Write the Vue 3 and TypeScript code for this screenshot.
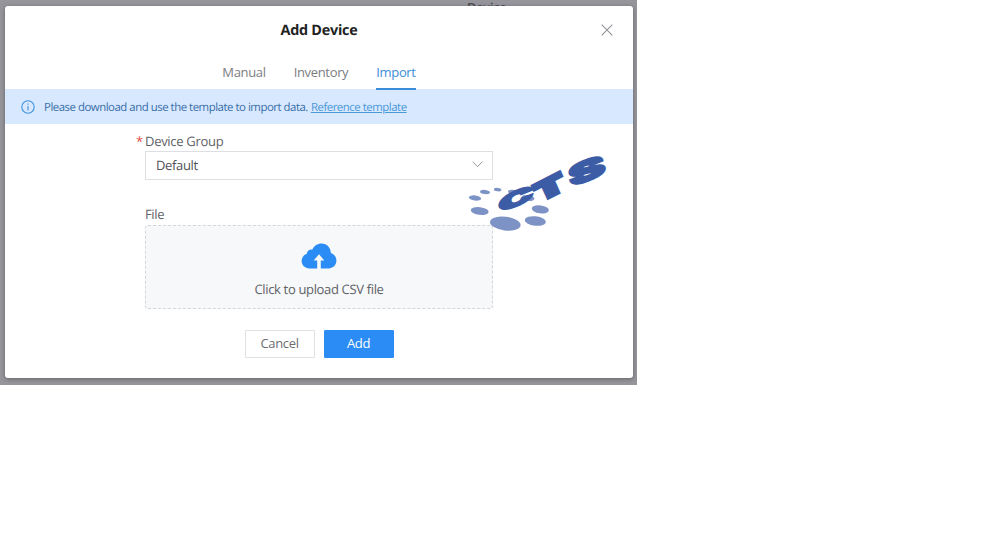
<script setup lang="ts">
import { ref } from 'vue'

const tabs = ['Manual', 'Inventory', 'Import']
const activeTab = ref('Import')
const dots = [
  { x: 475, y: 198, rx: 6.2, ry: 2.6 },
  { x: 485, y: 192, rx: 5, ry: 2.1 },
  { x: 497.7, y: 189.6, rx: 3.8, ry: 1.7 },
  { x: 513, y: 192, rx: 5, ry: 2.2 },
  { x: 528, y: 198, rx: 6.5, ry: 3 },
  { x: 479.7, y: 211, rx: 9, ry: 3.9 },
  { x: 540.3, y: 209.4, rx: 8.6, ry: 4 },
  { x: 535.3, y: 221, rx: 10.6, ry: 4.7 },
  { x: 505.3, y: 223.6, rx: 15.4, ry: 6.9 },
]
</script>

<template>
  <main class="backdrop">
    <div class="behind">Device</div>
    <section class="dialog">
      <header class="header">
        <h1>Add Device</h1>
        <button class="close" aria-label="Close">
          <svg width="12" height="12" viewBox="0 0 12 12"><path d="M.7.7 11.3 11.3M11.3.7.7 11.3" /></svg>
        </button>
      </header>
      <nav class="tabs">
        <button
          v-for="tab in tabs"
          :key="tab"
          class="tab"
          :class="{ active: tab === activeTab }"
          @click="activeTab = tab"
        >{{ tab }}</button>
      </nav>
      <div class="notice">
        <svg class="info" width="14" height="14" viewBox="0 0 14 14">
          <circle cx="7" cy="7" r="6.2" />
          <path d="M7 6v4.4M7 3.4v1.3" />
        </svg>
        <span class="message">Please download and use the template to import data.</span>
        <a class="link">Reference template</a>
      </div>
      <form class="form">
        <label class="label group"><span class="star">*</span>Device Group</label>
        <div class="select">
          <span>Default</span>
          <svg width="11" height="7" viewBox="0 0 11 7"><path d="M.7.8 5.5 5.6 10.3.8" /></svg>
        </div>
        <label class="label file">File</label>
        <div class="upload">
          <svg width="36" height="26" viewBox="0 0 36 26">
            <path
              d="M8.5 25.4C3.8 25.4.6 22 .6 18c0-3.7 2.5-6.4 5.2-7.3C6 7.7 8.7 6 11.4 6.6 13 2.8 16.6.6 20.5.6c5.5 0 9.3 4.2 9.3 9.4 3.3.9 5.6 4 5.6 7.5 0 4.5-3.5 7.9-7.9 7.9h-7.7v-8h3.5L18 11.2l-5.3 6.2h3.5v8z"
            />
          </svg>
          <span class="hint">Click to upload CSV file</span>
        </div>
      </form>
      <footer class="actions">
        <button class="btn">Cancel</button>
        <button class="btn primary">Add</button>
      </footer>
    </section>
    <svg class="brand" width="150" height="90" viewBox="463 147 150 90">
      <g class="dots">
        <ellipse
          v-for="d in dots"
          :key="d.x"
          :cx="d.x"
          :cy="d.y"
          :rx="d.rx"
          :ry="d.ry"
          :transform="`rotate(7 ${d.x} ${d.y})`"
        />
      </g>
      <g class="letters">
        <text transform="matrix(2.55 -1.02 .05 1.15 499 213)">C</text>
        <text class="wide" transform="matrix(2.15 -1.1 .55 1.22 540 202)">T</text>
        <text transform="matrix(2.9 -1.15 .35 1.45 571.5 187)">S</text>
      </g>
    </svg>
  </main>
</template>

<style>
body {
  margin: 0;
  background: #fff;
}
</style>

<style scoped>
.backdrop {
  position: relative;
  box-sizing: border-box;
  width: 637px;
  height: 385px;
  padding: 6px 4px 7px 5px;
  overflow: hidden;
  background: #95959b;
  font-family: "Open Sans", "Noto Sans", sans-serif;
  font-size: 13px;
  letter-spacing: -0.34px;
  text-rendering: geometricPrecision;
  color: #606266;
}
.behind {
  position: absolute;
  left: 467px;
  top: 1px;
  line-height: 14px;
  font-size: 12.6px;
  letter-spacing: -0.1px;
  font-weight: 600;
  color: #494b52;
}
.dialog {
  position: relative;
  display: flex;
  flex-direction: column;
  width: 628px;
  height: 372px;
  border-radius: 3px;
  background: #fff;
  box-shadow: 0 1px 4px rgba(0, 0, 0, 0.35);
}
button {
  padding: 0;
  border: 0;
  background: none;
  font: inherit;
  letter-spacing: inherit;
  color: inherit;
}
svg {
  display: block;
  flex: none;
}
.header {
  display: grid;
  grid-template-columns: 1fr auto 1fr;
  align-items: center;
  height: 48px;
  padding: 0 20px;
}
h1 {
  grid-column: 2;
  margin: 0;
  padding-top: 2px;
  font-size: 14.4px;
  letter-spacing: -0.25px;
  line-height: 20px;
  font-weight: 700;
  color: #222;
}
.close {
  justify-self: end;
}
.close path {
  fill: none;
  stroke: #909399;
  stroke-width: 1.1;
}
.tabs {
  display: flex;
  justify-content: center;
  gap: 28px;
  height: 35px;
}
.tab {
  position: relative;
  z-index: 1;
  box-sizing: border-box;
  height: 36px;
  border-bottom: 2px solid transparent;
  line-height: 36px;
  color: #7b7d81;
}
.tab.active {
  color: #3c8dd8;
  border-color: #3c8dd8;
}
.notice {
  display: flex;
  align-items: center;
  height: 35px;
  padding-left: 16px;
  background: #d8e8fe;
  font-size: 11.4px;
  letter-spacing: -0.47px;
  white-space: nowrap;
}
.info {
  fill: none;
  stroke: #3c91df;
  stroke-width: 1.1;
}
.message {
  margin-left: 9px;
  padding-top: 1px;
  color: #396fa9;
}
.link {
  margin-left: 3px;
  padding-top: 1px;
  color: #4a98d8;
  text-decoration: underline;
}
.form {
  display: flex;
  flex-direction: column;
  width: 348px;
  margin-left: 140px;
  padding-top: 7px;
}
.label {
  height: 20px;
  line-height: 20px;
}
.group {
  margin-left: -9px;
  display: flex;
  font-weight: 500;
  letter-spacing: -0.3px;
}
.star {
  width: 9px;
  color: #e34d43;
}
.select {
  box-sizing: border-box;
  display: flex;
  align-items: center;
  justify-content: space-between;
  height: 29px;
  padding: 0 9px 1px 10px;
  border: 1px solid #dedfe3;
  color: #505257;
}
.select svg {
  margin-top: -1px;
}
.select path {
  fill: none;
  stroke: #92959b;
}
.file {
  margin-top: 24px;
  margin-bottom: 1px;
}
.upload {
  box-sizing: border-box;
  display: flex;
  flex-direction: column;
  align-items: center;
  height: 84px;
  padding-top: 17px;
  border: 1px dashed #d3d6da;
  border-radius: 3px;
  background: #f6f8fa;
}
.upload path {
  fill: #2b8cf5;
}
.hint {
  margin-top: 10px;
  line-height: 20px;
}
.actions {
  display: flex;
  justify-content: center;
  gap: 9px;
  margin-top: 21px;
}
.btn {
  box-sizing: border-box;
  width: 70px;
  height: 28px;
  padding-bottom: 2px;
  border: 1px solid #dfe1e5;
  border-radius: 1px;
  color: #6c6e72;
}
.primary {
  border-color: #2b8cf5;
  background: #2b8cf5;
  color: #fff;
  font-weight: 500;
}
.brand {
  position: absolute;
  left: 463px;
  top: 147px;
}
.dots {
  fill: #7d92c5;
}
.letters {
  fill: #3c5da6;
  stroke: #3c5da6;
  stroke-width: 1.5;
  font: 900 18px Inter, "DejaVu Sans", sans-serif;
}
.wide {
  stroke-width: 2.7;
}
</style>
